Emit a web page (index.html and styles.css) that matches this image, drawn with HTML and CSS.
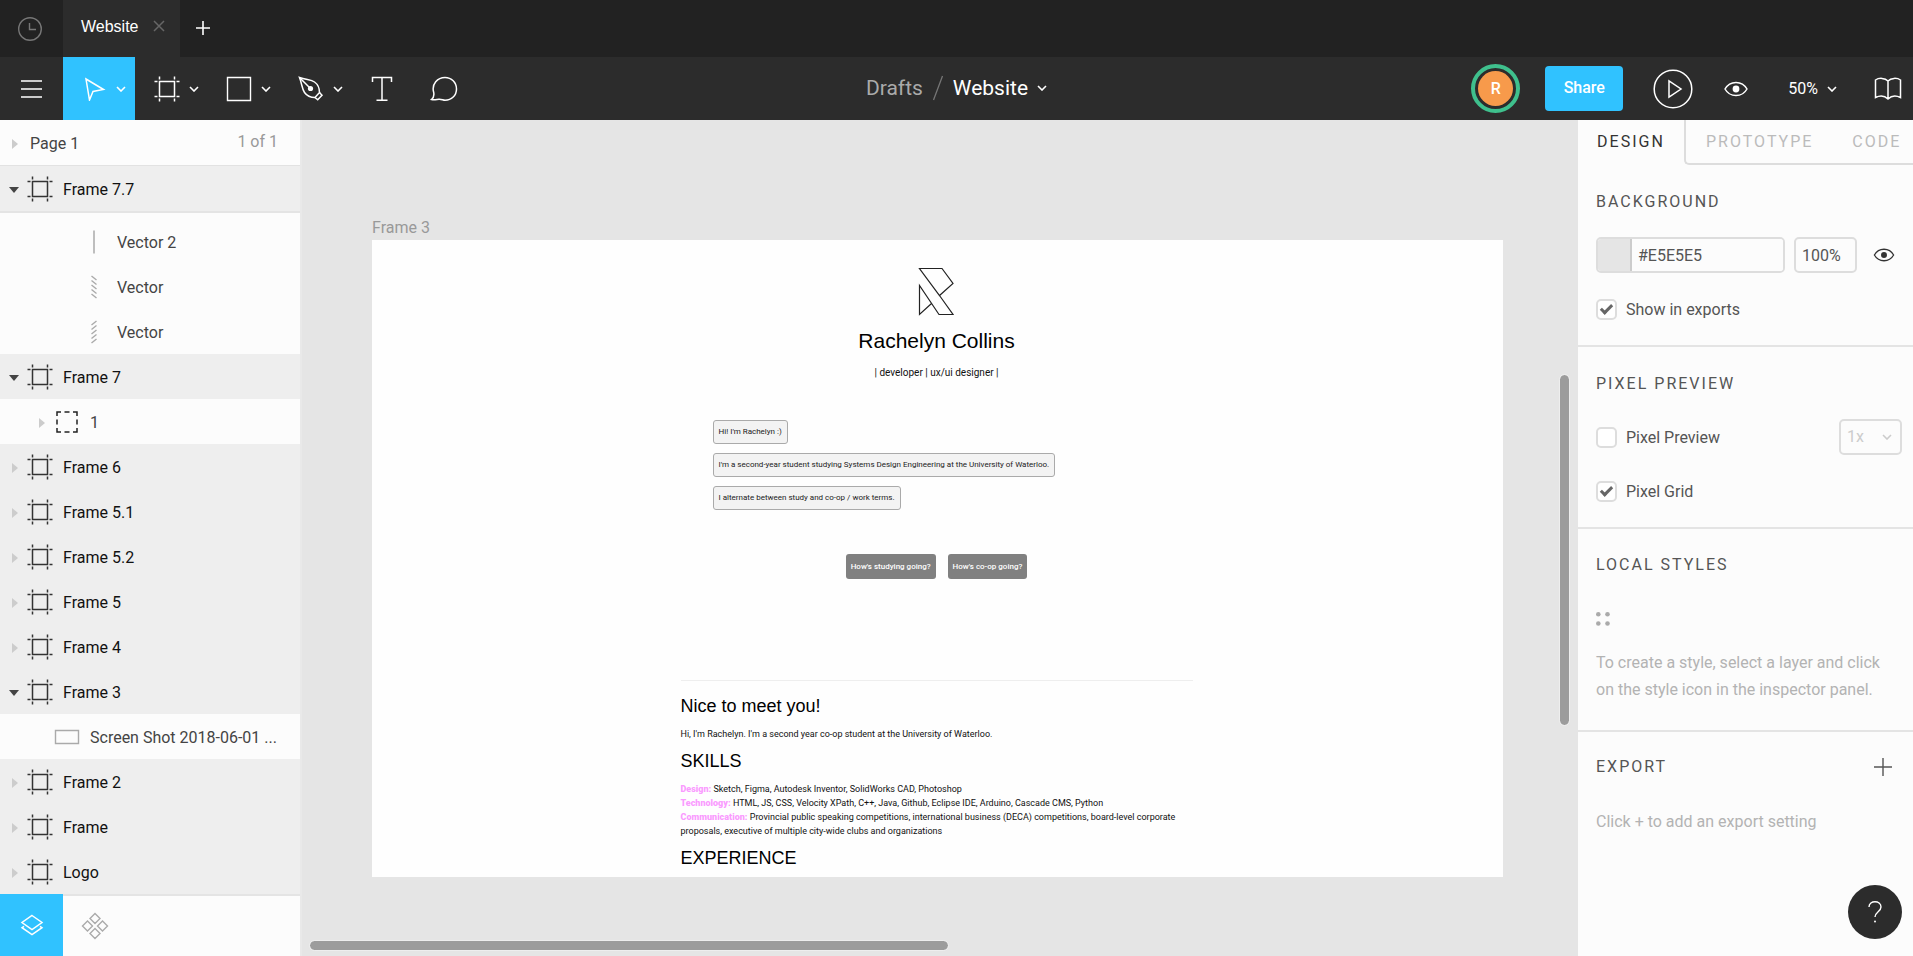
FILE: index.html
```html
<!DOCTYPE html>
<html lang="en">
<head>
<meta charset="utf-8">
<title>Website</title>
<link rel="stylesheet" href="styles.css">
</head>
<body>
<svg class="sprite" aria-hidden="true">
  <symbol id="chevron" viewBox="0 0 10 6"><path d="M1 1l4 4 4-4" fill="none" stroke="currentColor" stroke-width="1.6"/></symbol>
  <symbol id="frame" viewBox="0 0 26 26"><path d="M5.5 5.5h15v15h-15z" fill="none" stroke="currentColor" stroke-width="1.5"/><path d="M5.5 .5v3M20.5 .5v3M5.5 22.500v3M20.500 22.500v3M.5 5.500h3M.5 20.500h3M22.500 5.500h3M22.500 20.500h3" fill="none" stroke="currentColor" stroke-width="1.500"/></symbol>
  <symbol id="right" viewBox="0 0 6 10"><path d="M0 0l6 5-6 5z" fill="currentColor"/></symbol>
  <symbol id="down" viewBox="0 0 10 6"><path d="M0 0h10L5 6z" fill="currentColor"/></symbol>
  <symbol id="eye" viewBox="0 0 24 16"><path d="M1 8C6-.8 18-.8 23 8 18 16.800 6 16.800 1 8z" fill="none" stroke="currentColor" stroke-width="1.500"/><circle cx="12" cy="8" r="3.400" fill="currentColor"/></symbol>
</svg>
<div class="app">
  <header class="tabs">
    <button class="recent" aria-label="Recent files"><svg width="26" height="26" viewBox="0 0 26 26"><circle cx="13" cy="13" r="11.300" fill="none" stroke="currentColor" stroke-width="1.400"/><path d="M12.500 7v6.500h6.500" fill="none" stroke="currentColor" stroke-width="1.400"/></svg></button>
    <div class="tab"><span>Website</span><button class="tab-close" aria-label="Close tab"><svg width="12" height="12" viewBox="0 0 12 12"><path d="M1 1l10 10M11 1L1 11" stroke="currentColor" stroke-width="1.500"/></svg></button></div>
    <button class="tab-add" aria-label="New tab"><svg width="14" height="14" viewBox="0 0 14 14"><path d="M7 0v14M0 7h14" stroke="currentColor" stroke-width="1.600"/></svg></button>
  </header>

  <nav class="toolbar">
    <div class="tools">
      <button class="menu" aria-label="Menu"><svg width="21" height="18" viewBox="0 0 21 18"><path d="M0 1h21M0 9h21M0 17h21" stroke="currentColor" stroke-width="1.500"/></svg></button>
      <button class="tool active" aria-label="Move"><svg width="24" height="24" viewBox="0 0 24 24"><path d="M3 2l17.500 10.500-10.500 2-3.500 8.500z" fill="none" stroke="currentColor" stroke-width="1.500"/></svg><svg class="chev"><use href="#chevron"/></svg></button>
      <button class="tool" aria-label="Frame"><svg width="26" height="26"><use href="#frame"/></svg><svg class="chev"><use href="#chevron"/></svg></button>
      <button class="tool" aria-label="Rectangle"><svg width="26" height="26" viewBox="0 0 26 26"><path d="M1.500 1.500h23v23h-23z" fill="none" stroke="currentColor" stroke-width="1.400"/></svg><svg class="chev"><use href="#chevron"/></svg></button>
      <button class="tool" aria-label="Pen"><svg width="26" height="26" viewBox="0 0 26 26"><g fill="none" stroke="currentColor" stroke-width="1.500"><path d="M1.500 1.500C4 8 4 13 6.500 16.500c2.500 3.500 6.500 5 10.500 5l4.500-5c0-4-1.500-8-5-10.500C13 3.500 8 4 1.500 1.500z"/><path d="M17 21.500l2.700 2.300 4.300-4.600-2.500-2.700"/><path d="M1.500 1.500L12 12"/></g><circle cx="12.500" cy="12.500" r="2.600" fill="currentColor"/></svg><svg class="chev"><use href="#chevron"/></svg></button>
      <button class="tool single" aria-label="Text"><svg width="22" height="26" viewBox="0 0 22 26"><path d="M1.500 6V1.500h19V6M11 1.500v22.500M5.500 24.200h11" fill="none" stroke="currentColor" stroke-width="1.500"/></svg></button>
      <button class="tool single" aria-label="Comment"><svg width="28" height="26" viewBox="0 0 28 26"><path d="M1.500 23.500C4.500 21 4.200 18.500 3.600 16 1.500 8 7.500 1.500 15 1.500c6.500 0 11.500 5 11.500 11.500S21.500 24.300 15 24.300c-2 0-3.500-1.300-6-1.100-2.500.2-4.500.8-7.500.3z" fill="none" stroke="currentColor" stroke-width="1.500"/></svg></button>
    </div>
    <div class="crumbs"><a href="#drafts">Drafts</a><svg width="10" height="26" viewBox="0 0 10 26"><path d="M9.500 1L.5 25" stroke="#777" stroke-width="1.300"/></svg><button>Website<svg class="chev"><use href="#chevron"/></svg></button></div>
    <div class="actions">
      <span class="avatar"><span>R</span></span>
      <button class="share">Share</button>
      <button class="play" aria-label="Present"><svg width="40" height="40" viewBox="0 0 40 40"><circle cx="20" cy="20" r="18.800" fill="none" stroke="currentColor" stroke-width="1.500"/><path d="M16 12v16l12-8z" fill="none" stroke="currentColor" stroke-width="1.500"/></svg></button>
      <button class="view" aria-label="View"><svg width="24" height="16"><use href="#eye"/></svg></button>
      <button class="zoom">50%<svg class="chev"><use href="#chevron"/></svg></button>
      <button class="library" aria-label="Library"><svg width="28" height="24" viewBox="0 0 28 24"><path d="M14 4C11 .8 5 .6 1.500 3v17.500c4-2 9-2 12.500 1.500 3.500-3.500 8.500-3.500 12.500-1.500V3C23 .6 17 .8 14 4zM14 4v18" fill="none" stroke="currentColor" stroke-width="1.500"/></svg></button>
    </div>
  </nav>

  <main class="work">
    <aside class="layers">
      <button class="page"><svg class="right"><use href="#right"/></svg><span>Page 1</span><small>1 of 1</small></button>
      <ul class="list">
        <li class="row top first"><svg class="down"><use href="#down"/></svg><svg class="ico"><use href="#frame"/></svg>Frame 7.7</li>
        <li class="row deep"><svg class="ico" viewBox="0 0 26 26"><path d="M13 1.500v23" stroke="#aaa" stroke-width="1.500"/></svg>Vector 2</li>
        <li class="row deep"><svg class="ico" viewBox="0 0 26 26"><path d="M10.500 2l5 4M10.500 6.500l5 4M10.500 11l5 4M10.500 15.500l5 4M10.500 20l5 4" stroke="#aaa" stroke-width="1.400"/></svg>Vector</li>
        <li class="row deep"><svg class="ico" viewBox="0 0 26 26"><path d="M15.500 2l-5 4M15.500 6.500l-5 4M15.500 11l-5 4M15.500 15.500l-5 4M15.500 20l-5 4" stroke="#aaa" stroke-width="1.400"/></svg>Vector</li>
        <li class="row top"><svg class="down"><use href="#down"/></svg><svg class="ico"><use href="#frame"/></svg>Frame 7</li>
        <li class="row child"><svg class="right"><use href="#right"/></svg><svg class="ico" viewBox="0 0 26 26"><path d="M3 7V3h4M10.500 3h5M19 3h4v4M23 10.500v5M23 19v4h-4M15.500 23h-5M7 23H3v-4M3 15.500v-5" fill="none" stroke="#222" stroke-width="1.500"/></svg>1</li>
        <li class="row top"><svg class="right"><use href="#right"/></svg><svg class="ico"><use href="#frame"/></svg>Frame 6</li>
        <li class="row top"><svg class="right"><use href="#right"/></svg><svg class="ico"><use href="#frame"/></svg>Frame 5.1</li>
        <li class="row top"><svg class="right"><use href="#right"/></svg><svg class="ico"><use href="#frame"/></svg>Frame 5.2</li>
        <li class="row top"><svg class="right"><use href="#right"/></svg><svg class="ico"><use href="#frame"/></svg>Frame 5</li>
        <li class="row top"><svg class="right"><use href="#right"/></svg><svg class="ico"><use href="#frame"/></svg>Frame 4</li>
        <li class="row top"><svg class="down"><use href="#down"/></svg><svg class="ico"><use href="#frame"/></svg>Frame 3</li>
        <li class="row child leaf"><svg class="ico" viewBox="0 0 26 26"><path d="M1.500 6.500h23v13h-23z" fill="none" stroke="#aaa" stroke-width="1.400"/></svg>Screen Shot 2018-06-01 ...</li>
        <li class="row top"><svg class="right"><use href="#right"/></svg><svg class="ico"><use href="#frame"/></svg>Frame 2</li>
        <li class="row top"><svg class="right"><use href="#right"/></svg><svg class="ico"><use href="#frame"/></svg>Frame</li>
        <li class="row top"><svg class="right"><use href="#right"/></svg><svg class="ico"><use href="#frame"/></svg>Logo</li>
      </ul>
      <div class="switch">
        <button class="on" aria-label="Layers"><svg width="24" height="24" viewBox="0 0 24 24"><path d="M12 2.500l10 7-10 7-10-7zM4 13.300l-2 1.400 10 7 10-7-2-1.400" fill="none" stroke="currentColor" stroke-width="1.500"/></svg></button>
        <button aria-label="Components"><svg width="28" height="28" viewBox="0 0 28 28"><path d="M14 1.500l5 5-5 5-5-5zM14 16.500l5 5-5 5-5-5zM6.500 9l5 5-5 5-5-5zM21.500 9l5 5-5 5-5-5z" fill="none" stroke="currentColor" stroke-width="1.400"/></svg></button>
      </div>
    </aside>

    <section class="canvas">
      <h2 class="frame-name">Frame 3</h2>
      <article class="artboard">
        <svg class="logo" width="37" height="49" viewBox="0 0 37 49"><path d="M1.500 1.500H24l11 15L21.500 28.500 1.500 1.500zM21.500 28.500l13.500 19H21L1.500 18.500v29L13.500 36.500" fill="none" stroke="#222" stroke-width="1.200"/></svg>
        <h1>Rachelyn Collins</h1>
        <p class="role">| developer | ux/ui designer |</p>
        <div class="chat">
          <p>Hi! I'm Rachelyn :)</p>
          <p>I'm a second-year student studying Systems Design Engineering at the University of Waterloo.</p>
          <p>I alternate between study and co-op / work terms.</p>
        </div>
        <div class="replies"><button>How's studying going?</button><button>How's co-op going?</button></div>
        <div class="about">
          <h3>Nice to meet you!</h3>
          <p>Hi, I'm Rachelyn. I'm a second year co-op student at the University of Waterloo.</p>
          <h3>SKILLS</h3>
          <p><b>Design:</b> Sketch, Figma, Autodesk Inventor, SolidWorks CAD, Photoshop<br><b>Technology:</b> HTML, JS, CSS, Velocity XPath, C++, Java, Github, Eclipse IDE, Arduino, Cascade CMS, Python<br><b>Communication:</b> Provincial public speaking competitions, international business (DECA) competitions, board-level corporate proposals, executive of multiple city-wide clubs and organizations</p>
          <h3>EXPERIENCE</h3>
        </div>
      </article>
      <div class="bar-v"></div>
      <div class="bar-h"></div>
    </section>

    <aside class="inspector">
      <div class="modes"><button class="current">DESIGN</button><div class="rest"><button>PROTOTYPE</button><button>CODE</button></div></div>
      <section class="group">
        <h2>BACKGROUND</h2>
        <div class="fill">
          <div class="color"><span class="swatch"></span><input type="text" value="#E5E5E5" aria-label="Color"></div>
          <input class="opacity" type="text" value="100%" aria-label="Opacity">
          <button aria-label="Toggle visibility"><svg width="22" height="14"><use href="#eye"/></svg></button>
        </div>
        <label class="check"><input type="checkbox" checked>Show in exports</label>
      </section>
      <section class="group">
        <h2>PIXEL PREVIEW</h2>
        <div class="line"><label class="check"><input type="checkbox">Pixel Preview</label>
          <span class="select"><select aria-label="Preview scale" disabled><option>1x</option></select><svg class="chev"><use href="#chevron"/></svg></span></div>
        <label class="check"><input type="checkbox" checked>Pixel Grid</label>
      </section>
      <section class="group styles">
        <h2>LOCAL STYLES</h2>
        <svg class="dots" width="14" height="14" viewBox="0 0 14 14" fill="#aaa"><circle cx="2.300" cy="2.300" r="2.300"/><circle cx="11.500" cy="2.300" r="2.300"/><circle cx="2.300" cy="11.500" r="2.300"/><circle cx="11.500" cy="11.500" r="2.300"/></svg>
        <p>To create a style, select a layer and click on the style icon in the inspector panel.</p>
      </section>
      <section class="group export">
        <div class="line"><h2>EXPORT</h2><button aria-label="Add export"><svg width="18" height="18" viewBox="0 0 18 18"><path d="M9 0v18M0 9h18" stroke="currentColor" stroke-width="1.400"/></svg></button></div>
        <p>Click + to add an export setting</p>
      </section>
      <button class="help" aria-label="Help"><svg width="16" height="24" viewBox="0 0 16 24"><path d="M2 7c0-7 12-7 12 0 0 4.500-6 5-6 10" fill="none" stroke="currentColor" stroke-width="1.400"/><circle cx="8" cy="21.500" r="1" fill="currentColor"/></svg></button>
    </aside>
  </main>
</div>
</body>
</html>
```

FILE: styles.css
```css
* { box-sizing: border-box; }
body { margin: 0; font: 16px/24px Roboto, sans-serif; color: #444; }
h1, h2, h3, p, ul { margin: 0; padding: 0; font-weight: 400; }
button { border: 0; padding: 0; background: none; color: inherit; font: inherit; letter-spacing: inherit; display: flex; align-items: center; justify-content: center; }
svg { flex: none; display: block; }
.sprite { position: absolute; width: 0; height: 0; }
.chev { width: 10px; height: 6px; }
.app { height: 100vh; display: flex; flex-direction: column; overflow: hidden; }

.tabs { display: flex; height: 57px; flex: none; background: #222; color: #fff; }
.recent { width: 63px; padding-right: 3px; color: #777; }
.tab { display: flex; align-items: center; gap: 14px; width: 117px; padding-left: 18px; padding-bottom: 3px; background: #2c2c2c; font-family: "Liberation Sans", Arial, sans-serif; }
.tab-close { padding-bottom: 2px; color: #666; }
.tab-add { width: 46px; padding-bottom: 2px; }

.toolbar { display: grid; grid-template-columns: 1fr auto 1fr; height: 63px; flex: none; background: #2c2c2c; color: #fff; }
.tools, .actions { display: flex; align-items: center; }
.tools button { height: 63px; }
.menu { width: 63px; }
.tool { width: 72px; gap: 9px; padding-left: 10px; }
.tool.active { background: #30c2ff; }
.tool.single { width: 62px; padding-left: 0; }
.crumbs { display: flex; align-items: center; gap: 10px; padding-bottom: 1px; font-size: 21px; }
.crumbs a { color: #aaa; text-decoration: none; }
.crumbs button { gap: 9px; }
.actions { justify-content: flex-end; padding-right: 11px; }
.avatar { width: 49px; height: 49px; margin-right: 25px; border: 4px solid #3fc08d; border-radius: 50%; padding: 3px; display: flex; }
.avatar span { flex: 1; border-radius: 50%; background: #f79a4b; display: flex; align-items: center; justify-content: center; font-weight: 500; }
.share { width: 78px; height: 45px; margin-right: 30px; padding-bottom: 2px; border-radius: 4px; background: #30c2ff; font-weight: 500; }
.play { margin-right: 31px; }
.view { margin-right: 40px; }
.zoom { gap: 9px; margin-right: 37px; }

.work { flex: 1; display: flex; min-height: 0; }
.layers { flex: none; width: 302px; display: flex; flex-direction: column; background: #fcfcfc; border-right: 2px solid #e9e9e9; }
.page { flex: none; height: 46px; padding: 2px 22px 0 12px; border-bottom: 1px solid #e2e2e2; justify-content: flex-start; gap: 12px; }
.page small { margin-left: auto; padding-bottom: 4px; font-size: 16px; color: #999; }
.list { flex: 1; min-height: 0; overflow: hidden; list-style: none; }
.right { width: 6px; height: 10px; color: #ccc; }
.down { width: 10px; height: 6px; color: #444; }
.ico { width: 26px; height: 26px; margin: 0 10px 2px 0; }
.row { display: flex; align-items: center; height: 45px; padding-top: 2px; white-space: nowrap; }
.row.top { background: #eee; color: #111; }
.row.top .right { margin: 0 9px 0 12px; }
.row.top .down { margin: 0 8px 0 9px; }
.row.top .ico { color: #333; }
.row.first { height: 47px; border-bottom: 2px solid #e4e4e4; margin-bottom: 6px; }
.row.deep { padding-left: 81px; }
.row.child { padding-left: 39px; }
.row.child .right { margin-right: 9px; }
.row.leaf { padding-left: 54px; }
.switch { flex: none; display: flex; height: 62px; border-top: 2px solid #e4e4e4; }
.switch button { width: 63px; color: #aaa; }
.switch .on { margin-top: -2px; background: #30c2ff; color: #fff; }

.canvas { flex: 1; min-width: 0; position: relative; display: flex; flex-direction: column; padding: 96px 75px 79px 70px; background: #e5e5e5; }
.frame-name { font-size: 16px; line-height: 24px; color: #999; }
.artboard { flex: 1; min-height: 0; overflow: hidden; background: #fefefe; color: #111; padding: 27px 2px 0 0; display: flex; flex-direction: column; align-items: center; font: 9px/14px Roboto, sans-serif; }
.artboard h1, .artboard h3 { font-family: "Liberation Sans", Arial, sans-serif; }
.artboard h1 { margin-top: 12px; font-size: 21px; line-height: 26px; color: #000; }
.role { margin-top: 12px; font-size: 10px; }
.chat { width: 512px; max-width: 100%; margin-top: 40px; padding-left: 32px; display: flex; flex-direction: column; align-items: flex-start; gap: 9px; font-size: 8px; }
.chat p { height: 24px; padding: 4px 5px; border: 1px solid #aaa; border-radius: 3px; background: #f3f3f3; color: #222; }
.replies { display: flex; gap: 12px; margin-top: 44px; font-size: 8px; }
.replies button { height: 25px; padding: 1px 5px 0; border-radius: 3px; background: #808080; color: #fff; font-weight: 500; }
.about { width: 512px; max-width: 100%; margin-top: 101px; border-top: 1px solid #eee; padding-top: 14px; }
.about h3 { font-size: 18px; line-height: 22px; color: #000; margin-bottom: 10px; }
.about p { margin-bottom: 9px; }
.about b { color: #fa9bff; font-weight: 900; }
.bar-v, .bar-h { position: absolute; border-radius: 5px; background: #9c9c9c; outline: 1px solid #eee; }
.bar-v { right: 9px; top: 255px; width: 9px; height: 350px; }
.bar-h { left: 8px; bottom: 6px; width: 50%; height: 9px; }

.inspector { flex: none; width: 335px; position: relative; background: #fcfcfc; color: #555; }
.modes { display: flex; height: 45px; letter-spacing: 2px; }
.current { width: 106px; color: #333; padding-bottom: 2px; }
.rest { flex: 1; display: flex; gap: 39px; padding-left: 20px; border-left: 2px solid #ddd; border-bottom: 2px solid #ddd; border-bottom-left-radius: 5px; color: #bbb; }
.group { padding: 25px 11px 25px 18px; border-bottom: 2px solid #e4e4e4; }
.group h2 { font-size: 16px; line-height: 24px; letter-spacing: 2px; }
.group p { padding-right: 10px; line-height: 27px; color: #b3b3b3; }
.fill { display: flex; align-items: center; margin: 23px 0 26px; }
.color { display: flex; width: 189px; height: 36px; margin-right: 9px; border: 2px solid #ddd; border-radius: 5px; overflow: hidden; }
.swatch { width: 34px; flex: none; background: #e5e5e5; border-right: 2px solid #ccc; }
.fill input { min-width: 0; font: inherit; color: #555; background: #fcfcfc; }
.color input { flex: 1; border: 0; padding: 1px 6px 0; }
.fill .opacity { width: 63px; height: 36px; margin-right: 16px; padding: 1px 6px 0; border: 2px solid #ddd; border-radius: 5px; }
.fill button { color: #333; }
.check { display: flex; align-items: center; gap: 9px; line-height: 21px; }
.check input { appearance: none; flex: none; width: 21px; height: 21px; margin: 0; border: 2px solid #ddd; border-radius: 5px; background: #fff; display: grid; place-items: center; }
.check input:checked::after { content: ""; box-sizing: border-box; width: 7px; height: 12px; margin-bottom: 3px; border: solid #666; border-width: 0 3px 3px 0; transform: rotate(45deg); }
.line { display: flex; align-items: center; justify-content: space-between; }
.group > .line { margin: 23px 0 26px; }
.select { position: relative; }
.select select { appearance: none; display: block; width: 63px; height: 36px; padding: 0 6px; border: 2px solid #ddd; border-radius: 5px; background: transparent; font: inherit; color: #ccc; opacity: 1; }
.select .chev { position: absolute; right: 10px; top: 15px; color: #ccc; }
.dots { margin: 35px 0 23px; }
.group.styles { padding: 24px 11px 27px 18px; }
.group.export { padding-top: 23px; border: 0; }
.export > .line { margin: 0 0 29px; padding-right: 10px; }
.help { position: absolute; right: 11px; bottom: 17px; width: 54px; height: 54px; border-radius: 50%; background: #2c2c2c; color: #fff; }
```
